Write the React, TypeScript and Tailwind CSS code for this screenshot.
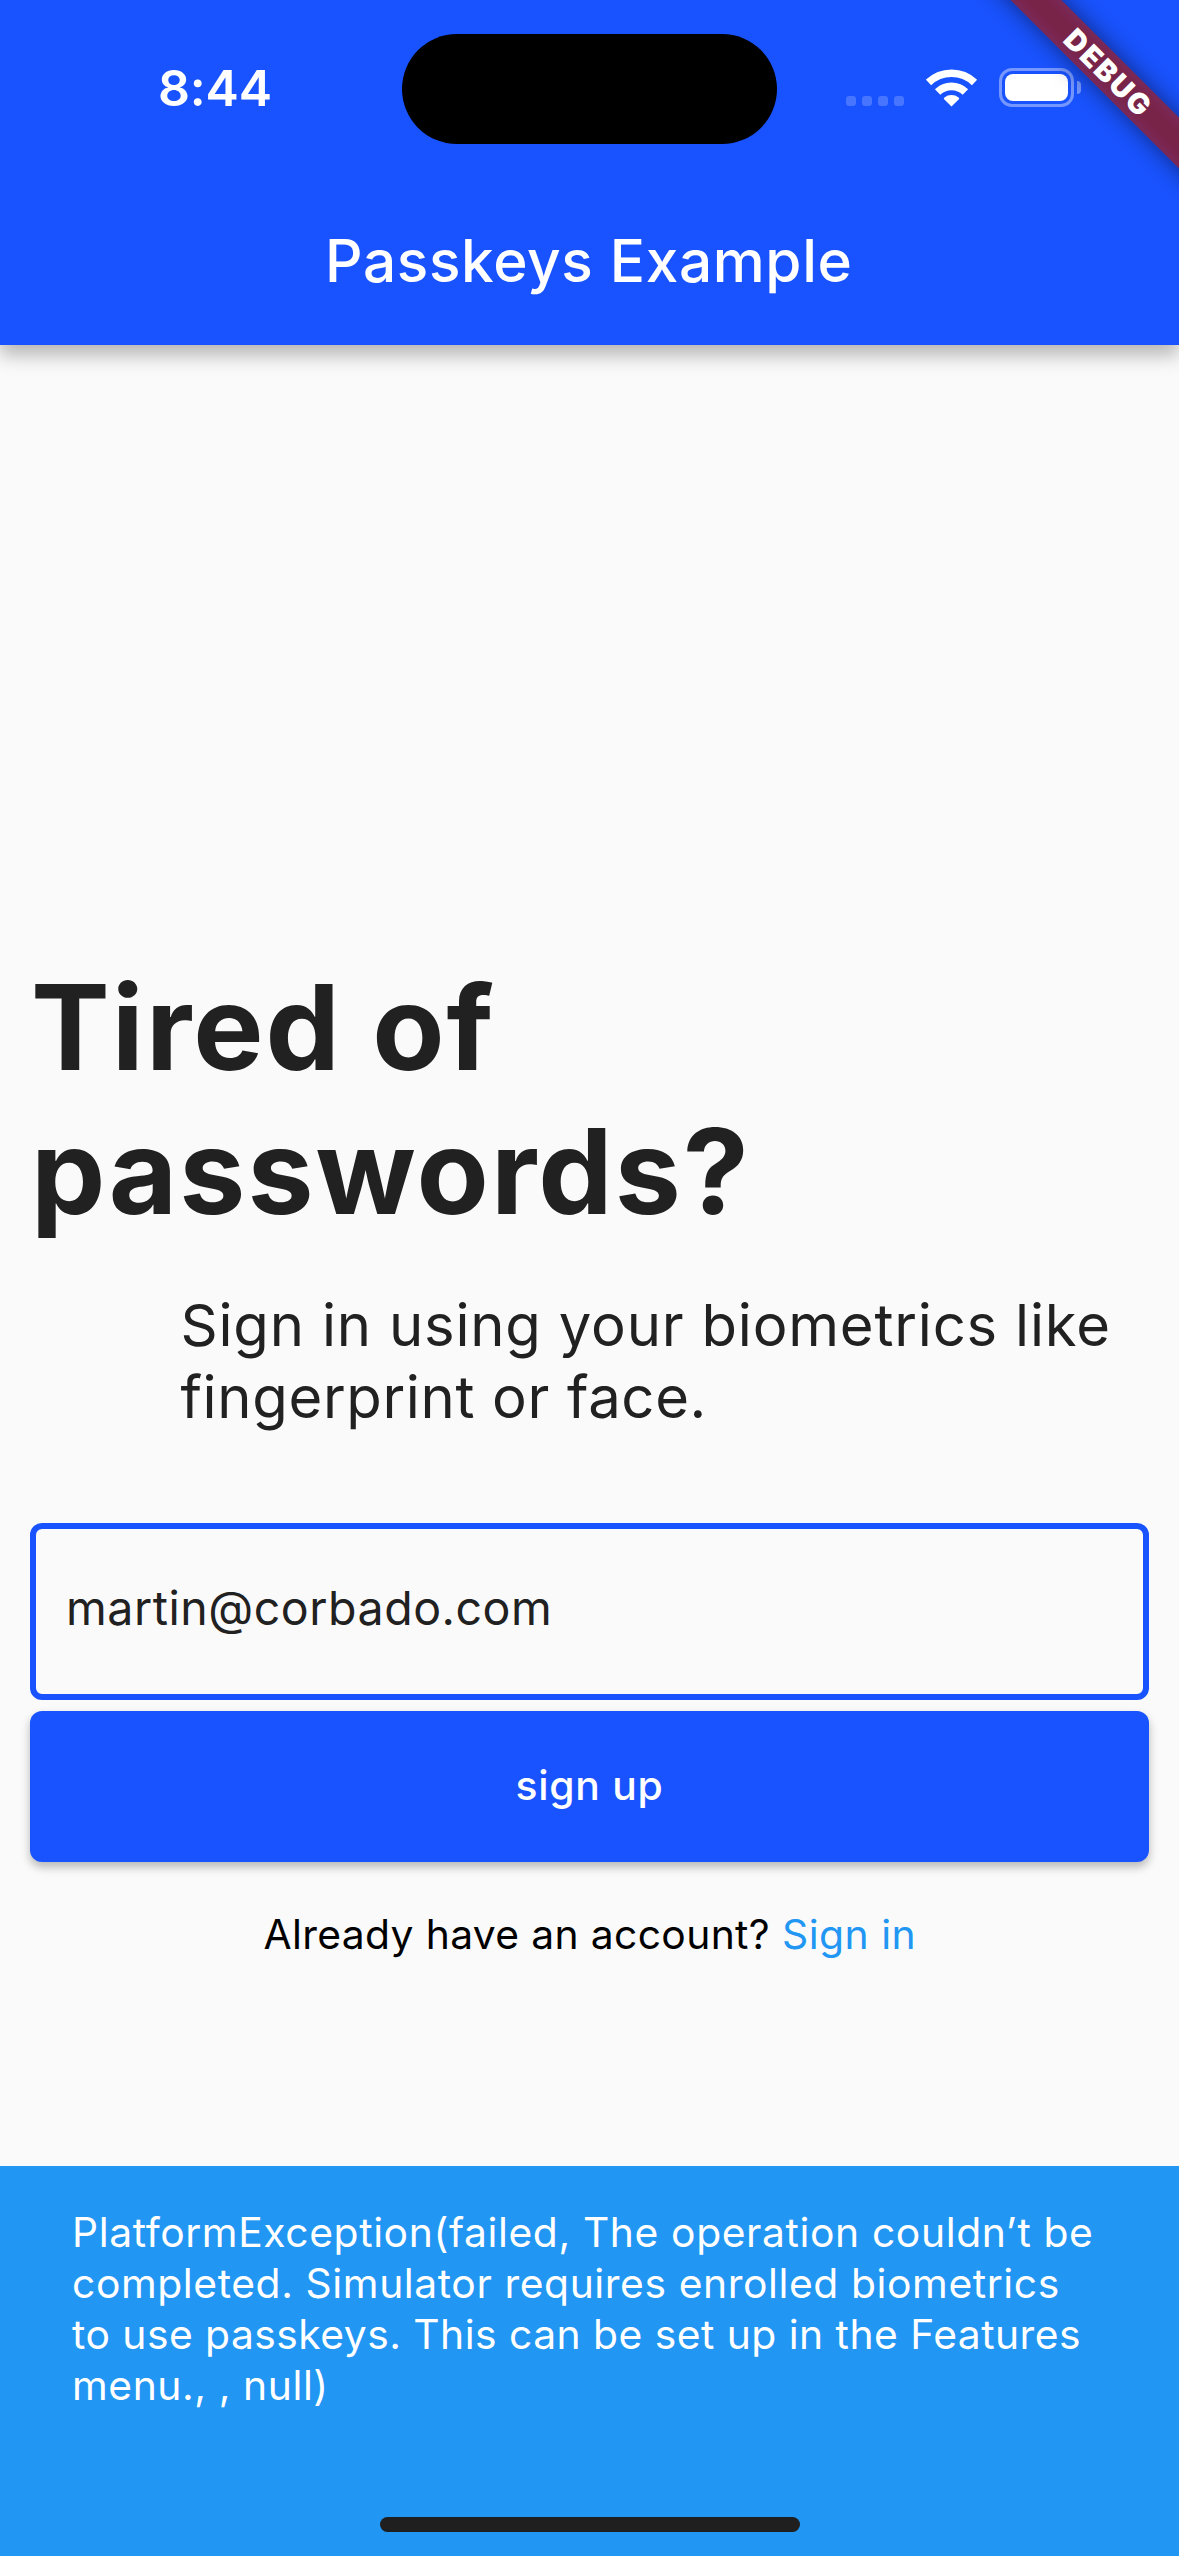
function SignalDots() {
  return (
    <div className="mt-[27px] flex gap-[6px]">
      <span className="size-[10px] rounded-[3px] bg-white/20" />
      <span className="size-[10px] rounded-[3px] bg-white/20" />
      <span className="size-[10px] rounded-[3px] bg-white/20" />
      <span className="size-[10px] rounded-[3px] bg-white/20" />
    </div>
  );
}

function WifiIcon() {
  return (
    <svg className="ml-[22px] h-[38px] w-[52px]" viewBox="0 0 52 38" fill="none">
      <path d="M2.5 13.4A33.3 33.3 0 0 1 48.5 13.4" stroke="white" strokeWidth="7.6" />
      <path d="M11.6 23A20 20 0 0 1 39.4 23" stroke="white" strokeWidth="7.8" />
      <path d="M25.5 37.4L17.9 29.9Q17.6 29.2 18.4 28.6A11.4 11.4 0 0 1 32.6 28.6Q33.4 29.2 33.1 29.9Z" fill="white" />
    </svg>
  );
}

function BatteryIcon() {
  return (
    <div className="ml-[21px] flex items-center gap-[3px]">
      <div className="h-[39px] w-[75px] rounded-[13px] border-[3px] border-white/40 p-[3px]">
        <div className="h-full w-full rounded-[8px] bg-white" />
      </div>
      <div className="h-[13px] w-[4px] rounded-r-full bg-white/40" />
    </div>
  );
}

function StatusBar() {
  return (
    <div className="flex h-[177px] items-center">
      <div className="w-[402px] pl-[158px] text-[50px] leading-[60px] font-semibold tracking-[-0.18px]">
        <div className="-mt-[2px]">8:44</div>
      </div>
      <div className="mt-px h-[110px] w-[375px] rounded-full bg-black" />
      <div className="-mt-[2px] flex items-center pl-[69px]">
        <SignalDots />
        <WifiIcon />
        <BatteryIcon />
      </div>
    </div>
  );
}

function DebugBanner() {
  return (
    <div className="absolute top-[72px] left-[1108px] z-20 size-0 rotate-45">
      <div className="absolute -top-[18px] -left-[200px] h-[36px] w-[400px] bg-black/50 blur-[12px]" />
      <div className="absolute -top-[18px] -left-[200px] flex h-[36px] w-[400px] items-center justify-center bg-[rgba(183,28,28,0.627)] pl-[2px] text-[29px] leading-none font-black tracking-[2px] text-white">
        DEBUG
      </div>
    </div>
  );
}

export default function App() {
  return (
    <div className="relative flex h-[2556px] w-[1179px] flex-col overflow-hidden bg-[#fafafa] font-['Inter',sans-serif] whitespace-nowrap text-[#212121]">
      <header className="relative z-10 h-[345px] shrink-0 bg-[#1953ff] text-white shadow-[0_10px_18px_rgba(0,0,0,0.28)]">
        <StatusBar />
        <h1 className="flex h-[168px] items-center pl-[325px] text-[58.5px] font-medium tracking-[0.65px]">
          Passkeys Example
        </h1>
      </header>
      <DebugBanner />

      <main className="flex grow flex-col px-[30px] pt-[610px]">
        <h2 className="pl-px text-[118px] leading-[144px] font-bold tracking-[2.1px]">
          Tired of
          <br />
          passwords?
        </h2>
        <p className="mt-[46px] pl-[150.5px] text-[58px] leading-[72px]">
          <span className="tracking-[0.8px]">Sign in using your biometrics like</span>
          <br />
          <span className="tracking-[0.65px]">fingerprint or face.</span>
        </p>
        <div className="mt-[89.5px] flex h-[177px] items-center rounded-[12px] border-[6px] border-[#1953ff] pb-[4px] pl-[30px] text-[46.5px] tracking-[0.54px]">
          martin@corbado.com
        </div>
        <button className="mt-[11.5px] flex h-[150.5px] items-center justify-center rounded-[12px] bg-[#1953ff] pb-px text-[40.8px] font-medium tracking-[0.75px] text-white shadow-[0_5px_10px_rgba(0,0,0,0.27)]">
          sign up
        </button>
        <p className="mt-[47px] flex pl-[233.5px] text-[40.8px] leading-[51px] text-black">
          <span className="w-[518.5px] tracking-[0.35px]">Already have an account?</span>
          <a className="tracking-[0.5px] text-[#2196f3]">Sign in</a>
        </p>
      </main>

      <footer className="flex h-[390px] shrink-0 flex-col items-center justify-between bg-[#2196f3] pt-[41px] pb-[24px]">
        <p className="w-full pl-[72px] text-[40.8px] leading-[51px] text-white">
          <span className="tracking-[0.61px]">PlatformException(failed, The operation couldn’t be</span>
          <br />
          <span className="tracking-[0.59px]">completed. Simulator requires enrolled biometrics</span>
          <br />
          <span className="tracking-[0.47px]">to use passkeys. This can be set up in the Features</span>
          <br />
          <span className="tracking-[0.57px]">menu., , null)</span>
        </p>
        <div className="h-[15px] w-[420px] rounded-full bg-[#1f1f1f]" />
      </footer>
    </div>
  );
}
